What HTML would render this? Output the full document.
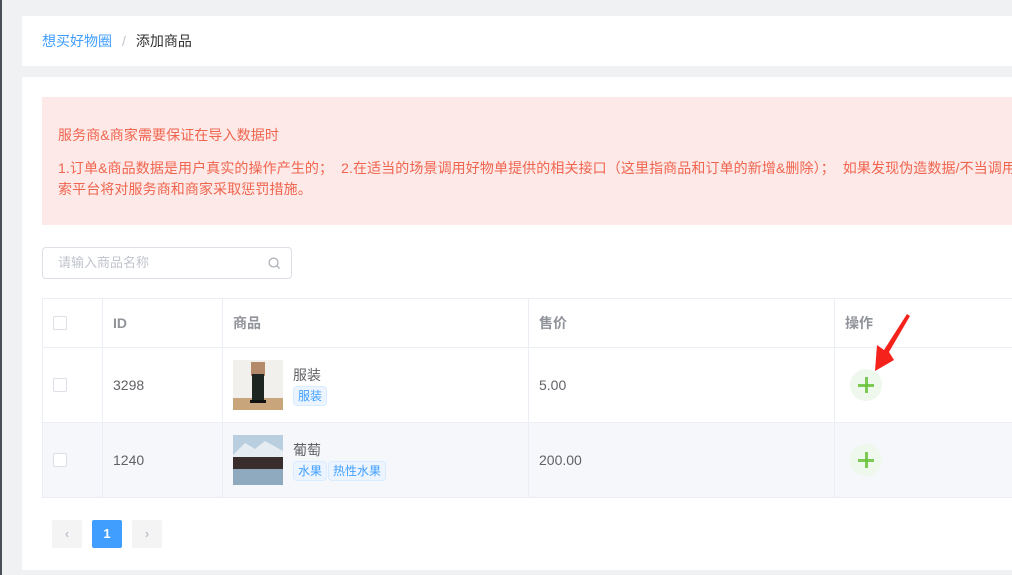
<!DOCTYPE html><html><head><meta charset="utf-8"><style>
*{margin:0;padding:0;box-sizing:border-box}
html,body{overflow:hidden}
body{width:1012px;height:575px;background:#f0f1f3;font-family:"Liberation Sans","Noto Sans CJK SC",sans-serif;position:relative;color:#606266}
.lb{position:absolute;left:0;top:0;width:2px;height:575px;background:#4a4f57}
.c1{position:absolute;left:22px;top:16px;width:990px;height:50px;background:#fff;font-size:14px;line-height:50px;padding-left:20px}
.c2{position:absolute;left:22px;top:77px;width:990px;height:493px;background:#fff;overflow:hidden}
.al{position:absolute;left:20px;top:20px;width:980px;height:128px;background:#fde9e7;color:#f0654f;font-size:14px;padding:28px 0 0 16px;line-height:21px;white-space:nowrap;overflow:hidden;letter-spacing:0.1px}
.sr{position:absolute;left:20px;top:170px;width:250px;height:32px;border:1px solid #dcdfe6;border-radius:4px;font-size:13px;color:#c0c4cc;line-height:30px;padding-left:15px}
table{position:absolute;left:20px;top:221px;border-collapse:collapse;font-size:14px;table-layout:fixed;width:992px}
td{border:1px solid #ebeef5;padding:0 10px;vertical-align:middle}
tr.h td{height:49px;color:#909399;font-weight:bold}
tr.r td{height:75px}
tr.g td{background:#f5f7fa}
.cb{width:14px;height:14px;border:1px solid #dcdfe6;border-radius:2px;background:#fff;display:block}
.tag{display:inline-block;font-size:12px;color:#409eff;background:#ecf5ff;border:1px solid #d9ecff;border-radius:4px;padding:0 4px;line-height:18px;margin-right:1px}
.pl{width:32px;height:32px;border-radius:50%;background:#eef8ec;position:relative;margin-left:5px}
.pl:before{content:"";position:absolute;left:8px;top:15px;width:16px;height:3px;background:#67c23a;opacity:.85}
.pl:after{content:"";position:absolute;left:14.5px;top:8px;width:3px;height:16px;background:#67c23a;opacity:.85}
.pg{position:absolute;top:443px;width:30px;height:28px;background:#f4f4f5;border-radius:2px;color:#c0c4cc;text-align:center;line-height:28px;font-size:13px;font-weight:bold}
</style></head><body>
<div class="lb"></div>
<div class="c1"><span style="color:#409eff">想买好物圈</span><span style="color:#c0c4cc;margin:0 10px">/</span><span style="color:#303133">添加商品</span></div>
<div class="c2">
<div class="al">服务商&amp;商家需要保证在导入数据时<div style="margin-top:12px">1.订单&amp;商品数据是用户真实的操作产生的；&nbsp; 2.在适当的场景调用好物单提供的相关接口（这里指商品和订单的新增&amp;删除）；&nbsp; 如果发现伪造数据/不当调用接口，快手电商/搜</div><div>索平台将对服务商和商家采取惩罚措施。</div></div>
<div class="sr">请输入商品名称<svg style="position:absolute;right:10px;top:9px" width="13" height="13" viewBox="0 0 14 14"><circle cx="6" cy="6" r="4.8" fill="none" stroke="#a8abb2" stroke-width="1.3"/><path d="M9.5 9.5L12.5 12.5" stroke="#a8abb2" stroke-width="1.3"/></svg></div>
<table>
<colgroup><col style="width:60px"><col style="width:120px"><col style="width:306px"><col style="width:306px"><col style="width:200px"></colgroup>
<tr class="h"><td><span class="cb"></span></td><td>ID</td><td>商品</td><td>售价</td><td>操作</td></tr>
<tr class="r"><td><span class="cb"></span></td><td>3298</td><td><div style="display:flex;align-items:center"><svg width="50" height="50" style="margin-right:10px"><rect width="50" height="50" fill="#f2f0ec"/><rect y="38" width="50" height="12" fill="#c9a57c"/><rect x="18" y="2" width="14" height="14" fill="#b58a6a"/><rect x="19" y="14" width="12" height="26" fill="#1e2622"/><rect x="17" y="40" width="16" height="3" fill="#111"/></svg><div><div style="line-height:22px;color:#606266">服装</div><span class="tag">服装</span></div></div></td><td>5.00</td><td><div class="pl"></div></td></tr>
<tr class="r g"><td><span class="cb"></span></td><td>1240</td><td><div style="display:flex;align-items:center"><svg width="50" height="50" style="margin-right:10px"><rect width="50" height="50" fill="#b9cfe0"/><path d="M0 20L12 8L22 14L32 6L50 16V26H0Z" fill="#e6edf2"/><rect y="22" width="50" height="12" fill="#3a2e2c"/><rect y="34" width="50" height="16" fill="#8fa9bf"/></svg><div><div style="line-height:22px;color:#606266">葡萄</div><span class="tag">水果</span><span class="tag">热性水果</span></div></div></td><td>200.00</td><td><div class="pl"></div></td></tr>
</table>
<div class="pg" style="left:30px">&lsaquo;</div>
<div class="pg" style="left:70px;background:#409eff;color:#fff">1</div>
<div class="pg" style="left:110px">&rsaquo;</div>
</div>
<svg style="position:absolute;left:0;top:0" width="1012" height="575"><path d="M910 316L889 352L894 360L875 371L877 345L884 350L907 314Z" fill="#f5221b"/></svg>
</body></html>
